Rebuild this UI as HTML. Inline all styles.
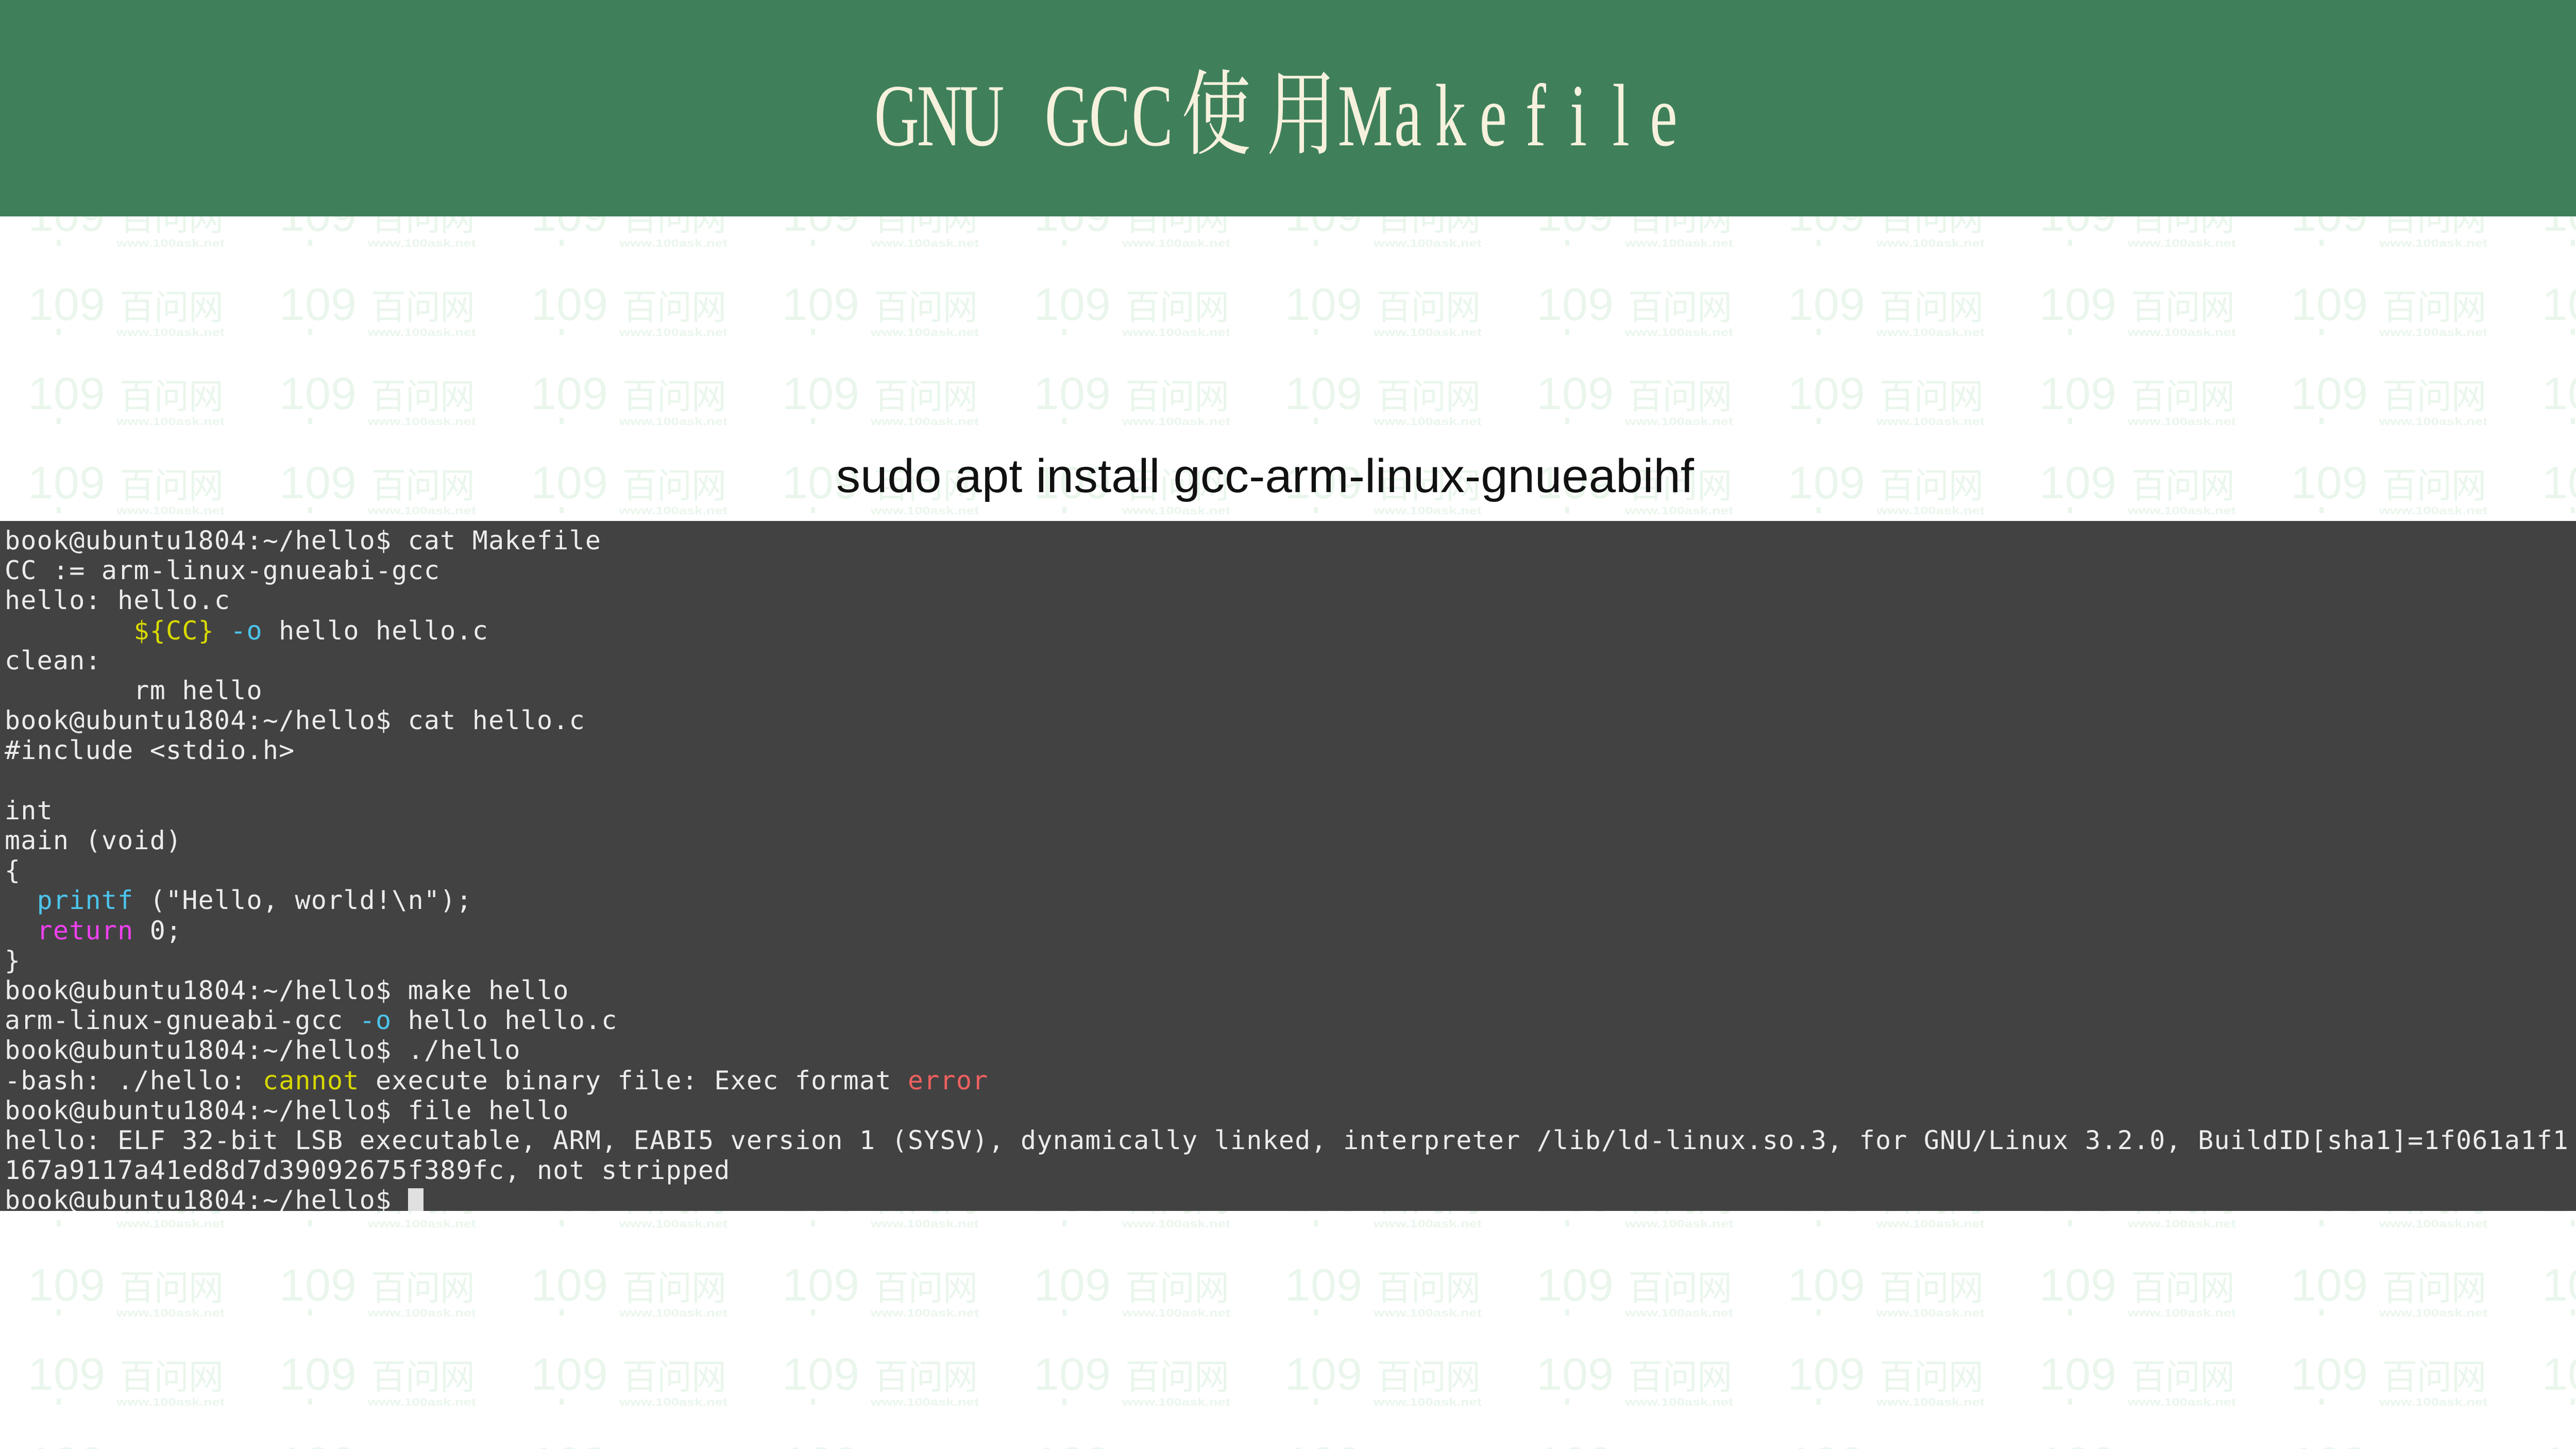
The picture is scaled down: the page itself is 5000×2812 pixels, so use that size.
<!DOCTYPE html>
<html><head><meta charset="utf-8"><style>
html,body{margin:0;padding:0}
body{width:5000px;height:2812px;position:relative;overflow:hidden;background:#fff;font-family:"Liberation Sans","Noto Sans CJK SC",sans-serif}
svg{position:absolute;left:0;top:0}
#term{position:absolute;left:0;top:1011px;width:5000px;height:1339px;background:#424242;overflow:hidden}
pre{margin:0;position:absolute;left:9px;top:9px;font-family:"DejaVu Sans Mono",monospace;font-size:50px;letter-spacing:1.2px;line-height:58.2px;color:#ececec;white-space:pre}
.y{color:#d8d800}.c{color:#4cc4ec}.m{color:#f040f0}.r{color:#f06060}
.cur{display:inline-block;width:30px;height:48px;background:#e0e0e0;vertical-align:-8px}
</style></head><body>
<svg width="5000" height="2812" xmlns="http://www.w3.org/2000/svg">
<defs><pattern id="p" x="54" y="558" width="488" height="173" patternUnits="userSpaceOnUse">
<g fill="#eaf6ec">
<text x="0" y="63" font-family="Liberation Sans" font-size="88" textLength="150" lengthAdjust="spacingAndGlyphs">109</text>
<text x="178" y="62" font-family="Noto Sans CJK SC" font-size="68" textLength="202">百问网</text>
<text x="172" y="94" font-family="Liberation Sans" font-weight="bold" font-size="21" textLength="210" lengthAdjust="spacingAndGlyphs">www.100ask.net</text>
<rect x="56" y="80" width="8" height="12"/>
</g></pattern></defs>
<rect width="5000" height="2812" fill="url(#p)"/>
<rect width="5000" height="420" fill="#3f805b"/>
<g fill="#f6f1dd" font-family="Liberation Serif, serif" font-size="172" text-anchor="middle">
<text transform="scale(0.7,1)" y="282" x="2486.3 2604.4 2722.6 2840.7 2958.9 3077.0 3195.1">GNU GCC</text>
<text transform="scale(0.7,1)" y="282" x="3785.9 3904 4022.1 4140.3 4258.4 4376.6 4494.7 4612.9">Makefile</text>
<text transform="scale(0.75,1)" y="285" font-family="Noto Serif CJK SC, serif" font-size="180" x="3147.5 3368">使用</text>
</g>
<text x="1623" y="955" font-family="Liberation Sans, sans-serif" font-size="92" fill="#111" textLength="1665" lengthAdjust="spacingAndGlyphs">sudo apt install gcc-arm-linux-gnueabihf</text>
</svg>
<div id="term"><pre>book@ubuntu1804:~/hello$ cat Makefile
CC := arm-linux-gnueabi-gcc
hello: hello.c
        <span class="y">${CC}</span> <span class="c">-o</span> hello hello.c
clean:
        rm hello
book@ubuntu1804:~/hello$ cat hello.c
#include &lt;stdio.h&gt;

int
main (void)
{
  <span class="c">printf</span> ("Hello, world!\n");
  <span class="m">return</span> 0;
}
book@ubuntu1804:~/hello$ make hello
arm-linux-gnueabi-gcc <span class="c">-o</span> hello hello.c
book@ubuntu1804:~/hello$ ./hello
-bash: ./hello: <span class="y">cannot</span> execute binary file: Exec format <span class="r">error</span>
book@ubuntu1804:~/hello$ file hello
hello: ELF 32-bit LSB executable, ARM, EABI5 version 1 (SYSV), dynamically linked, interpreter /lib/ld-linux.so.3, for GNU/Linux 3.2.0, BuildID[sha1]=1f061a1f1
167a9117a41ed8d7d39092675f389fc, not stripped
book@ubuntu1804:~/hello$ <span class="cur"></span></pre></div>
</body></html>
